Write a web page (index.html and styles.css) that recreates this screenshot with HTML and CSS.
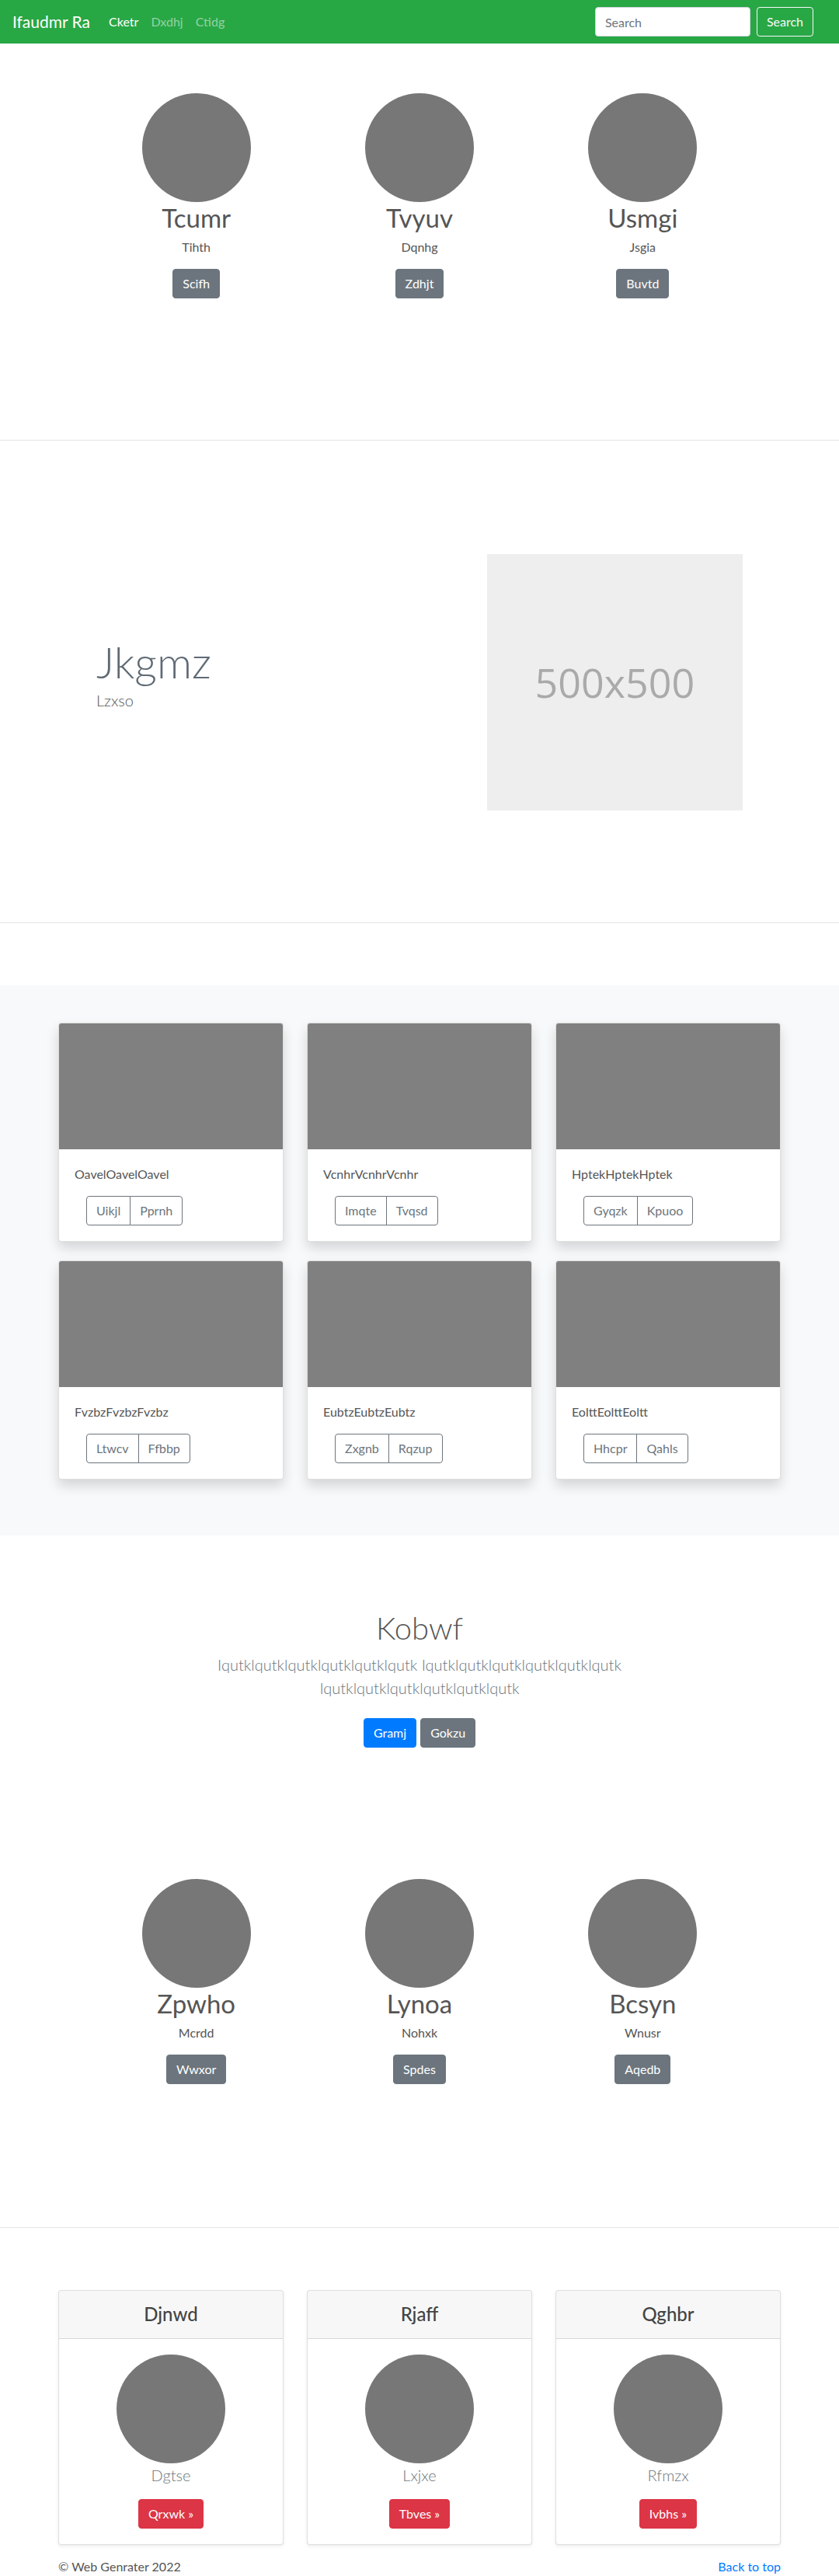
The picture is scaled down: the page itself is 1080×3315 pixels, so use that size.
FILE: index.html
```html
<!DOCTYPE html>
<html lang="en">
<head>
<meta charset="utf-8">
<title>Ifaudmr Ra</title>
<link rel="stylesheet" href="styles.css">
</head>
<body>
<nav class="navbar">
  <a class="brand" href="#">Ifaudmr Ra</a>
  <ul class="nav">
    <li><a class="nav-link active" href="#">Cketr</a></li>
    <li><a class="nav-link" href="#">Dxdhj</a></li>
    <li><a class="nav-link" href="#">Ctidg</a></li>
  </ul>
  <form class="search">
    <input class="search-input" type="text" placeholder="Search">
    <button class="btn btn-outline-light" type="button">Search</button>
  </form>
</nav>

<section class="marketing">
  <div class="narrow three">
    <div class="feature">
      <div class="circle"></div>
      <h2>Tcumr</h2>
      <p>Tihth</p>
      <a class="btn btn-secondary" href="#">Scifh</a>
    </div>
    <div class="feature">
      <div class="circle"></div>
      <h2>Tvyuv</h2>
      <p>Dqnhg</p>
      <a class="btn btn-secondary" href="#">Zdhjt</a>
    </div>
    <div class="feature">
      <div class="circle"></div>
      <h2>Usmgi</h2>
      <p>Jsgia</p>
      <a class="btn btn-secondary" href="#">Buvtd</a>
    </div>
  </div>
</section>

<hr class="divider">

<section class="featurette">
  <div class="narrow split">
    <div class="featurette-text">
      <h2 class="featurette-heading">Jkgmz</h2>
      <p class="lead">Lzxso</p>
    </div>
    <div class="featurette-media">
      <div class="placeholder">500x500</div>
    </div>
  </div>
</section>

<hr class="divider">

<section class="album">
  <div class="container">
    <div class="card-grid">
      <div class="card-col"><div class="card shadow-card"><div class="thumb"></div><div class="card-body"><p class="card-text">OavelOavelOavel</p><div class="btn-group"><a class="btn btn-outline-secondary" href="#">Uikjl</a><a class="btn btn-outline-secondary" href="#">Pprnh</a></div></div></div></div>
      <div class="card-col"><div class="card shadow-card"><div class="thumb"></div><div class="card-body"><p class="card-text">VcnhrVcnhrVcnhr</p><div class="btn-group"><a class="btn btn-outline-secondary" href="#">Imqte</a><a class="btn btn-outline-secondary" href="#">Tvqsd</a></div></div></div></div>
      <div class="card-col"><div class="card shadow-card"><div class="thumb"></div><div class="card-body"><p class="card-text">HptekHptekHptek</p><div class="btn-group"><a class="btn btn-outline-secondary" href="#">Gyqzk</a><a class="btn btn-outline-secondary" href="#">Kpuoo</a></div></div></div></div>
      <div class="card-col"><div class="card shadow-card"><div class="thumb"></div><div class="card-body"><p class="card-text">FvzbzFvzbzFvzbz</p><div class="btn-group"><a class="btn btn-outline-secondary" href="#">Ltwcv</a><a class="btn btn-outline-secondary" href="#">Ffbbp</a></div></div></div></div>
      <div class="card-col"><div class="card shadow-card"><div class="thumb"></div><div class="card-body"><p class="card-text">EubtzEubtzEubtz</p><div class="btn-group"><a class="btn btn-outline-secondary" href="#">Zxgnb</a><a class="btn btn-outline-secondary" href="#">Rqzup</a></div></div></div></div>
      <div class="card-col"><div class="card shadow-card"><div class="thumb"></div><div class="card-body"><p class="card-text">EolttEolttEoltt</p><div class="btn-group"><a class="btn btn-outline-secondary" href="#">Hhcpr</a><a class="btn btn-outline-secondary" href="#">Qahls</a></div></div></div></div>
    </div>
  </div>
</section>

<section class="jumbo">
  <div class="jumbo-inner">
    <h1>Kobwf</h1>
    <p class="lead">Iqutklqutklqutklqutklqutklqutk Iqutklqutklqutklqutklqutklqutk Iqutklqutklqutklqutklqutklqutk</p>
    <div class="jumbo-actions">
      <a class="btn btn-primary" href="#">Gramj</a>
      <a class="btn btn-secondary" href="#">Gokzu</a>
    </div>
  </div>
</section>

<section class="marketing marketing-2">
  <div class="narrow three">
    <div class="feature">
      <div class="circle"></div>
      <h2>Zpwho</h2>
      <p>Mcrdd</p>
      <a class="btn btn-secondary" href="#">Wwxor</a>
    </div>
    <div class="feature">
      <div class="circle"></div>
      <h2>Lynoa</h2>
      <p>Nohxk</p>
      <a class="btn btn-secondary" href="#">Spdes</a>
    </div>
    <div class="feature">
      <div class="circle"></div>
      <h2>Bcsyn</h2>
      <p>Wnusr</p>
      <a class="btn btn-secondary" href="#">Aqedb</a>
    </div>
  </div>
</section>

<hr class="divider">

<section class="pricing">
  <div class="container">
    <div class="card-grid">
      <div class="card-col"><div class="card price-card"><div class="card-header"><h4>Djnwd</h4></div><div class="card-body"><div class="circle"></div><p class="lead">Dgtse</p><a class="btn btn-danger" href="#">Qrxwk &raquo;</a></div></div></div>
      <div class="card-col"><div class="card price-card"><div class="card-header"><h4>Rjaff</h4></div><div class="card-body"><div class="circle"></div><p class="lead">Lxjxe</p><a class="btn btn-danger" href="#">Tbves &raquo;</a></div></div></div>
      <div class="card-col"><div class="card price-card"><div class="card-header"><h4>Qghbr</h4></div><div class="card-body"><div class="circle"></div><p class="lead">Rfmzx</p><a class="btn btn-danger" href="#">Ivbhs &raquo;</a></div></div></div>
    </div>
  </div>
</section>

<footer class="container footer">
  <p>&copy; Web Genrater 2022</p>
  <a href="#">Back to top</a>
</footer>
</body>
</html>
```

FILE: styles.css
```css
* { box-sizing: border-box; }

body {
  margin: 0;
  font-family: Lato, "Noto Sans", sans-serif;
  font-size: 16px;
  line-height: 24px;
  color: #555;
  background: #fff;
}

/* navbar */
.navbar {
  display: flex;
  align-items: center;
  height: 56px;
  padding: 8px 33px 8px 16px;
  background: #28a745;
}
.brand {
  color: #fff;
  font-size: 21px;
  line-height: 30px;
  margin-right: 16px;
  text-decoration: none;
}
.nav {
  display: flex;
  flex: 1;
  list-style: none;
  margin: 0;
  padding: 0;
}
.nav-link {
  display: block;
  padding: 8px;
  color: rgba(255, 255, 255, 0.5);
  text-decoration: none;
}
.nav-link.active { color: #fff; }
.search { display: flex; margin: 0; }
.search-input {
  width: 200px;
  height: 38px;
  margin-right: 8px;
  padding: 6px 12px;
  border: 1px solid #ced4da;
  border-radius: 4px;
  font-family: inherit;
  font-size: 16px;
  color: #495057;
  background: #fff;
}
.search-input::placeholder { color: #6c757d; }

/* buttons */
.btn {
  display: inline-block;
  padding: 6px 12px;
  font-family: inherit;
  font-size: 16px;
  line-height: 24px;
  border: 1px solid transparent;
  border-radius: 4px;
  text-align: center;
  text-decoration: none;
  white-space: nowrap;
}
.btn-outline-light { color: #f8f9fa; border-color: #f8f9fa; background: transparent; }
.btn-secondary { color: #fff; background: #6c757d; border-color: #6c757d; }
.btn-primary { color: #fff; background: #007bff; border-color: #007bff; }
.btn-danger { color: #fff; background: #dc3545; border-color: #dc3545; }
.btn-outline-secondary { color: #6c757d; border-color: #6c757d; background: transparent; }

.divider {
  height: 1px;
  margin: 0;
  border: 0;
  background: #e5e5e5;
}

/* marketing circles */
.marketing { padding: 64px 0 182px; }
.marketing-2 { padding: 161px 0 184px; }
.narrow { width: 862px; margin: 0 auto; }
.three { display: grid; grid-template-columns: repeat(3, 1fr); }
.feature { padding: 0 15px; text-align: center; }
.circle {
  width: 140px;
  height: 140px;
  margin: 0 auto;
  border-radius: 50%;
  background: #777;
}
.feature h2 {
  margin: 0 0 6px;
  font-size: 33px;
  line-height: 40px;
  font-weight: 400;
}
.feature p { margin: 0 0 16px; }

/* featurette */
.featurette { padding: 146px 0 144px; }
.split {
  display: grid;
  grid-template-columns: 7fr 5fr;
  align-items: center;
}
.featurette-text, .featurette-media { padding: 0 15px; }
.featurette-heading {
  margin: 0 0 6px;
  font-size: 56px;
  line-height: 1;
  font-weight: 300;
  color: #5f6a74;
}
.lead {
  font-size: 20px;
  line-height: 30px;
  font-weight: 300;
}
.featurette-text .lead { margin: 0 0 16px; }
.placeholder {
  height: 330px;
  display: flex;
  align-items: center;
  justify-content: center;
  background: #eee;
  color: #aaa;
  font-family: "Open Sans", sans-serif;
  font-size: 52px;
}

/* album */
.album {
  margin-top: 80px;
  padding: 48px 0;
  background: #f8f9fa;
}
.container { width: 960px; margin: 0 auto; padding: 0 15px; }
.card-grid {
  display: grid;
  grid-template-columns: repeat(3, 1fr);
  margin: 0 -15px;
}
.card-col { padding: 0 15px; }
.card {
  background: #fff;
  border: 1px solid rgba(0, 0, 0, 0.125);
  border-radius: 4px;
  overflow: hidden;
}
.shadow-card {
  margin-bottom: 24px;
  box-shadow: 0 8px 16px rgba(0, 0, 0, 0.15);
}
.thumb { height: 162px; background: #808080; }
.card-body { padding: 20px; }
.card-text { margin: 0 0 16px; }
.btn-group { display: inline-flex; margin-left: 15px; }
.btn-group .btn:first-child { border-radius: 4px 0 0 4px; }
.btn-group .btn + .btn { margin-left: -1px; border-radius: 0 4px 4px 0; }

/* jumbotron */
.jumbo { padding: 95px 0 0; text-align: center; }
.jumbo-inner { max-width: 640px; margin: 0 auto; padding: 0 15px; }
.jumbo h1 {
  margin: 0 0 8px;
  font-size: 40px;
  line-height: 48px;
  font-weight: 300;
}
.jumbo .lead { margin: 0 0 16px; color: #6c757d; }
.jumbo-actions {
  display: flex;
  justify-content: center;
  gap: 5px;
  margin: 0;
  padding: 8px 0;
}

/* pricing */
.pricing { padding-top: 80px; }
.price-card {
  text-align: center;
  box-shadow: 0 2px 4px rgba(0, 0, 0, 0.075);
}
.card-header {
  padding: 16px 20px;
  background: rgba(0, 0, 0, 0.03);
  border-bottom: 1px solid rgba(0, 0, 0, 0.125);
}
.card-header h4 {
  margin: 0;
  font-size: 24px;
  line-height: 1.2;
  font-weight: 500;
  color: #444;
}
.price-card .lead { margin: 0 0 16px; color: #6c757d; }

/* footer */
.footer {
  display: flex;
  justify-content: space-between;
  padding-top: 16px;
}
.footer p { margin: 0; }
.footer a { color: #007bff; text-decoration: none; }
```
